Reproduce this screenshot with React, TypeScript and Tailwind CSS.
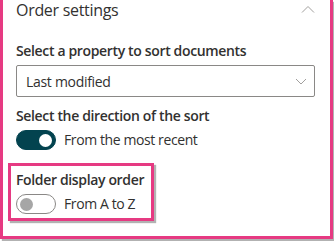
const font = { fontFamily: '"Open Sans", "Noto Sans", sans-serif' };

export default function App() {
  return (
    <div className="h-[241px] w-[334px] bg-white" style={font}>
      <div className="relative h-[239px] w-[333px] border-x-[3px] border-b-[3px] border-[#e63a82] bg-white shadow-[2px_2px_1px_rgba(0,0,0,0.3)]">
        <div className="px-[13px]">
          <div className="flex items-start justify-between">
            <span className="text-[16px] leading-[20px] tracking-[-0.3px] text-[#323130]">Order settings</span>
            <svg width="14" height="8" viewBox="0 0 14 8" className="mr-[2px] mt-[5px]">
              <path d="M1 7.5 L7 1.5 L13 7.5" fill="none" stroke="#a19f9d" strokeWidth="1" />
            </svg>
          </div>

          <Label className="mt-[21px]">Select a property to sort documents</Label>
          <div className="mt-[4px] flex h-[32px] w-[299px] items-center justify-between rounded-[2px] border border-[#8a8886] pl-[9px] pr-[7px]">
            <span className="text-[14px] tracking-[-0.3px] text-[#323130]">Last modified</span>
            <svg width="12" height="7" viewBox="0 0 12 7">
              <path d="M1 1 L6 6 L11 1" fill="none" stroke="#a19f9d" strokeWidth="1" />
            </svg>
          </div>

          <Label className="mt-[9px]">Select the direction of the sort</Label>
          <Toggle on label="From the most recent" className="mt-[4px]" />

          <div className="-ml-[8px] mt-[13px] w-[146px] border-[3px] border-[#e63a82] pb-[4px] pl-[5px] pt-[4px] shadow-[2px_2px_1px_rgba(0,0,0,0.3)]">
            <Label>Folder display order</Label>
            <Toggle label="From A to Z" className="mt-[4px]" />
          </div>
        </div>
      </div>
    </div>
  );
}

function Label({ children, className = "" }: { children: React.ReactNode; className?: string }) {
  return (
    <div className={`text-[14px] font-semibold leading-[20px] tracking-[-0.35px] text-[#323130] ${className}`}>
      {children}
    </div>
  );
}

function Toggle({ on, label, className = "" }: { on?: boolean; label: string; className?: string }) {
  return (
    <div className={`flex items-center gap-[8px] ${className}`}>
      <span
        className={`flex h-[20px] w-[40px] items-center rounded-full border px-[3px] ${
          on ? "justify-end border-[#03434f] bg-[#03434f]" : "justify-start border-[#8a8886] bg-white"
        }`}
      >
        <span className={`block h-[13px] w-[13px] rounded-full ${on ? "bg-white" : "bg-[#a6a6a6]"}`} />
      </span>
      <span className="text-[14px] leading-[20px] tracking-[-0.4px] text-[#323130]">{label}</span>
    </div>
  );
}
